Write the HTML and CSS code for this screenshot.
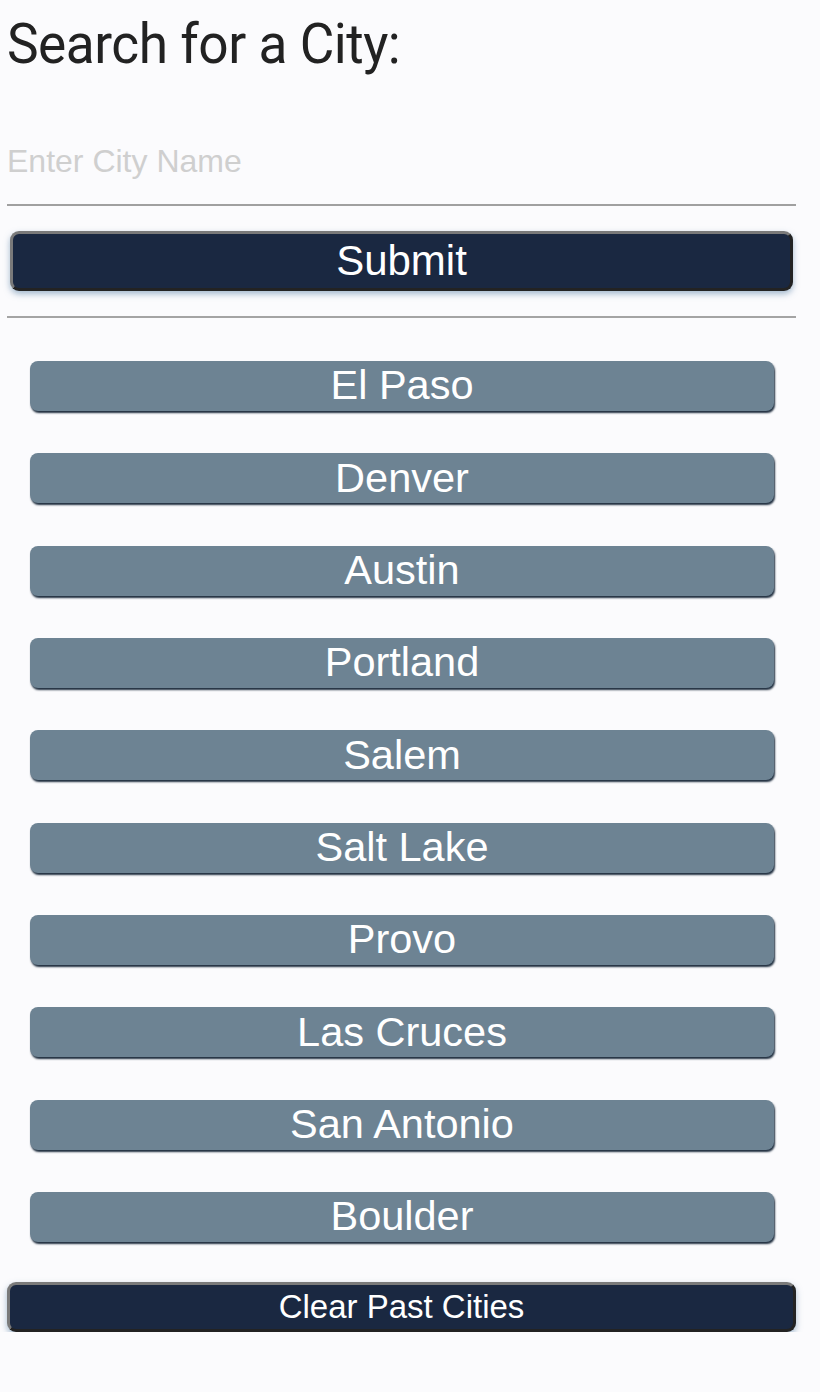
FILE: index.html
```html
<!DOCTYPE html>
<html lang="en">
<head>
<meta charset="utf-8">
<title>Weather Search</title>
<link rel="stylesheet" href="styles.css">
</head>
<body>
<main class="search">
  <h1 class="title">Search for a City:</h1>
  <input class="city-input" type="text" placeholder="Enter City Name">
  <button class="btn-primary submit">Submit</button>
  <hr class="divider">
  <div class="history">
    <button class="city">El Paso</button>
    <button class="city">Denver</button>
    <button class="city">Austin</button>
    <button class="city">Portland</button>
    <button class="city">Salem</button>
    <button class="city">Salt Lake</button>
    <button class="city">Provo</button>
    <button class="city">Las Cruces</button>
    <button class="city">San Antonio</button>
    <button class="city">Boulder</button>
  </div>
  <button class="btn-primary clear">Clear Past Cities</button>
</main>
</body>
</html>
```

FILE: styles.css
```css
html, body {
  margin: 0;
  background: #fbfbfd;
}

.search {
  width: 789px;
  margin-left: 7px;
  display: flex;
  flex-direction: column;
  font-family: "Liberation Sans", Arial, sans-serif;
}

.title {
  margin: 13px 0 0;
  font-family: Roboto, "Liberation Sans", sans-serif;
  font-weight: 400;
  font-size: 56px;
  letter-spacing: -0.5px;
  line-height: 63px;
  color: #222222;
  transform: scaleX(0.95);
  transform-origin: left center;
}

.city-input {
  margin-top: 43px;
  width: 100%;
  height: 87px;
  box-sizing: border-box;
  padding: 0;
  border: none;
  border-bottom: 2px solid #a0a0a0;
  background: transparent;
  font-family: "Liberation Sans", Arial, sans-serif;
  font-size: 32px;
  color: #222;
  outline: none;
}

.city-input::placeholder {
  color: #cfcfcf;
}

.btn-primary {
  box-sizing: border-box;
  display: flex;
  align-items: center;
  justify-content: center;
  padding: 0;
  background: #1a2841;
  color: #ffffff;
  font-family: "Liberation Sans", Arial, sans-serif;
  border-style: solid;
  border-width: 3px;
  border-color: #7a7a7a #232323 #232323 #7a7a7a;
  border-radius: 9px;
  box-shadow: 0 3px 6px rgba(90, 130, 165, 0.55);
}

.submit {
  margin: 25px 3px 0;
  height: 60px;
  font-size: 42px;
}

.divider {
  margin: 25px 0 0;
  border: none;
  border-top: 2px solid #a4a4a4;
  height: 0;
}

.history {
  margin-top: 43px;
  display: flex;
  flex-direction: column;
  gap: 42.33px;
  padding-left: 23px;
}

.city {
  box-sizing: border-box;
  width: 744px;
  height: 50px;
  padding: 0 0 2px;
  border: none;
  border-radius: 8px;
  background: #6d8393;
  color: #ffffff;
  font-family: "Liberation Sans", Arial, sans-serif;
  font-size: 41.5px;
  line-height: 1;
  box-shadow: 1px 2px 2px #1e2d3e;
}

.clear {
  margin-top: 40px;
  width: 789px;
  height: 50px;
  font-size: 33px;
}
```
